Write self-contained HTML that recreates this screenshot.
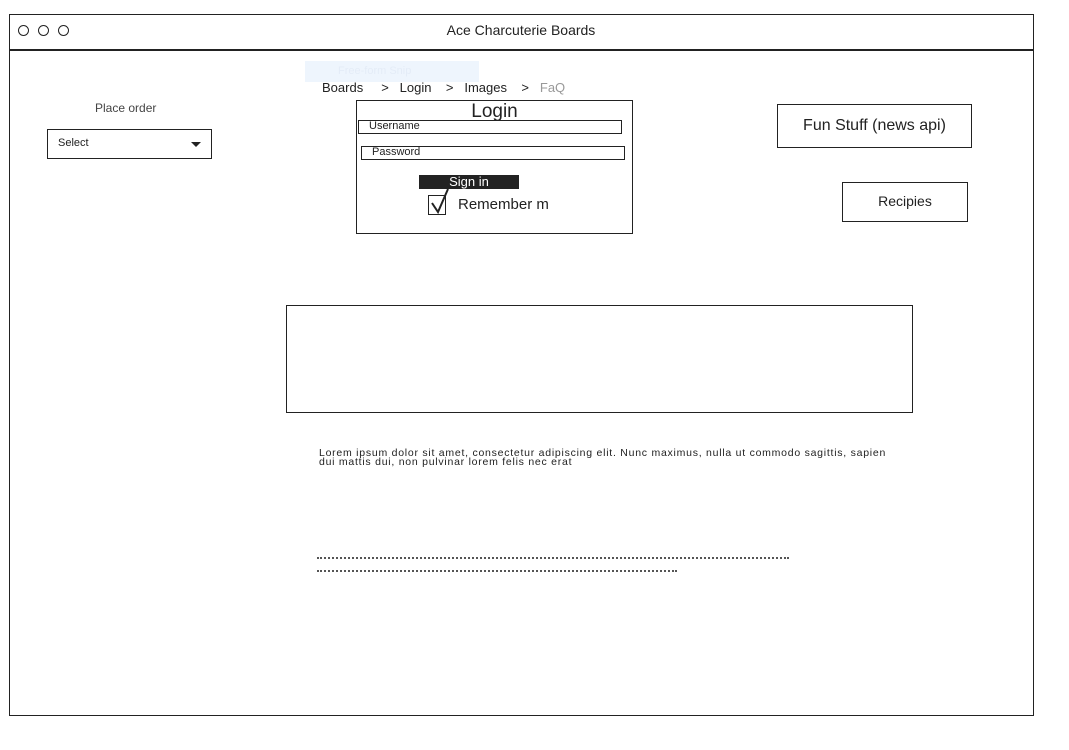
<!DOCTYPE html><html><head><style>
body{margin:0;width:1069px;height:750px;background:#fff;position:relative;font-family:"Liberation Sans",sans-serif;color:#222;overflow:hidden}
.a{position:absolute;box-sizing:border-box}
.b{border:1.5px solid #222}
</style></head><body>
<div class="a b" style="left:9px;top:14px;width:1025px;height:702px;border-width:1.5px"></div>
<div class="a" style="left:9px;top:49px;width:1025px;height:2px;background:#222"></div>
<div class="a" style="left:18px;top:25px;width:11px;height:11px;border:1.5px solid #222;border-radius:50%"></div>
<div class="a" style="left:38px;top:25px;width:11px;height:11px;border:1.5px solid #222;border-radius:50%"></div>
<div class="a" style="left:58px;top:25px;width:11px;height:11px;border:1.5px solid #222;border-radius:50%"></div>
<div class="a" style="left:0;width:1042px;top:22px;text-align:center;font-size:14px">Ace Charcuterie Boards</div>
<div class="a" style="left:305px;top:61px;width:174px;height:21px;background:#eef5fd;color:#e4ecf7;font-size:11px;padding:4px 0 0 33px">Free-form Snip</div>
<div class="a" style="left:322px;top:80px;font-size:13px;white-space:pre">Boards     &gt;   Login    &gt;   Images    &gt;   <span style="color:#999">FaQ</span></div>
<div class="a" style="left:95px;top:101px;font-size:12px;color:#444">Place order</div>
<div class="a b" style="left:47px;top:129px;width:165px;height:30px;font-size:11px;padding:7px 10px">Select</div>
<div class="a" style="left:191px;top:142px;border-left:5px solid transparent;border-right:5px solid transparent;border-top:5px solid #222"></div>
<div class="a b" style="left:356px;top:100px;width:277px;height:134px"></div>
<div class="a" style="left:356px;top:101px;width:277px;text-align:center;font-size:19px">Login</div>
<div class="a b" style="left:358px;top:120px;width:264px;height:14px;font-size:11px;line-height:11px;padding-left:10px">Username</div>
<div class="a b" style="left:361px;top:146px;width:264px;height:14px;font-size:11px;line-height:11px;padding-left:10px">Password</div>
<div class="a" style="left:419px;top:175px;width:100px;height:14px;background:#222;color:#fff;font-size:13px;line-height:14px;text-align:center">Sign in</div>
<div class="a b" style="left:428px;top:195px;width:18px;height:20px"></div>
<svg class="a" style="left:428px;top:186px" width="24" height="30"><path d="M4 17 L10 26 L20 3" fill="none" stroke="#222" stroke-width="2"/></svg>
<div class="a" style="left:458px;top:196px;font-size:15px">Remember m</div>
<div class="a b" style="left:777px;top:104px;width:195px;height:44px;font-size:16px;text-align:center;line-height:41px">Fun Stuff (news api)</div>
<div class="a b" style="left:842px;top:182px;width:126px;height:40px;font-size:14px;text-align:center;line-height:37px">Recipies</div>
<div class="a b" style="left:286px;top:305px;width:627px;height:108px"></div>
<div class="a" style="left:319px;top:449px;width:620px;font-size:10.5px;line-height:9px;letter-spacing:0.75px;white-space:nowrap">Lorem ipsum dolor sit amet, consectetur adipiscing elit. Nunc maximus, nulla ut commodo sagittis, sapien<br>dui mattis dui, non pulvinar lorem felis nec erat</div>
<div class="a" style="left:317px;top:557px;width:472px;height:3px;border-top:2px dotted #555"></div>
<div class="a" style="left:317px;top:570px;width:360px;height:3px;border-top:2px dotted #555"></div>
</body></html>
